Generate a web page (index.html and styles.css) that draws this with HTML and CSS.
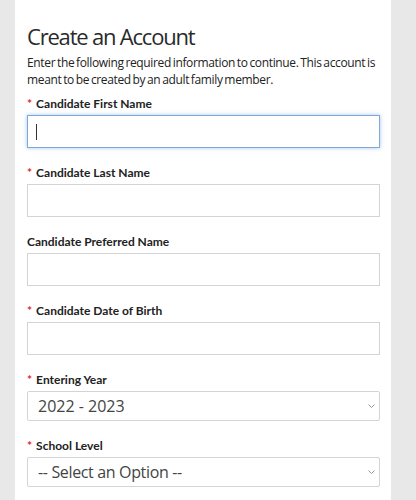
FILE: index.html
```html
<!DOCTYPE html>
<html>
<head>
<meta charset="utf-8">
<link rel="stylesheet" href="styles.css">
</head>
<body>
<div class="panel">
  <h1 class="title">Create an Account</h1>
  <p class="intro">Enter the following required information to continue. This account is meant to be created by an adult family member.</p>
  <form class="form">
    <div class="field">
      <label class="label"><span class="req">*</span>Candidate First Name</label>
      <div class="input focused"><span class="caret"></span></div>
    </div>
    <div class="field">
      <label class="label"><span class="req">*</span>Candidate Last Name</label>
      <div class="input"></div>
    </div>
    <div class="field">
      <label class="label">Candidate Preferred Name</label>
      <div class="input"></div>
    </div>
    <div class="field">
      <label class="label"><span class="req">*</span>Candidate Date of Birth</label>
      <div class="input"></div>
    </div>
    <div class="field">
      <label class="label"><span class="req">*</span>Entering Year</label>
      <div class="select"><span class="sel-text">2022 - 2023</span>
        <svg class="chev" width="7" height="4" viewBox="0 0 7 4"><path d="M0.5 0.5 L3.5 3.5 L6.5 0.5" fill="none" stroke="#999" stroke-width="1"/></svg>
      </div>
    </div>
    <div class="field">
      <label class="label"><span class="req">*</span>School Level</label>
      <div class="select"><span class="sel-text tight">-- Select an Option --</span>
        <svg class="chev" width="7" height="4" viewBox="0 0 7 4"><path d="M0.5 0.5 L3.5 3.5 L6.5 0.5" fill="none" stroke="#999" stroke-width="1"/></svg>
      </div>
    </div>
  </form>
</div>
</body>
</html>
```
FILE: styles.css
```css
html, body {
  margin: 0;
  padding: 0;
  background: #e8e8e8;
  overflow: hidden;
}
body {
  font-family: "Open Sans", "Noto Sans", sans-serif;
  color: #222;
  height: 500px;
}
.panel {
  margin: 0 25px 0 15px;
  background: #fff;
  padding: 20px 11px 20px 12px;
  height: 460px;
}
.title {
  margin: 0;
  font-weight: 400;
  font-size: 22px;
  letter-spacing: -1.2px;
  line-height: 32px;
  color: #2a2a2a;
}
.intro {
  margin: 2px 0 0;
  font-size: 12px;
  letter-spacing: -0.35px;
  word-spacing: -1px;
  line-height: 17px;
  color: #222;
}
.form {
  margin-top: 8px;
}
.field {
  display: flex;
  flex-direction: column;
  margin-bottom: 17px;
}
.label {
  font-family: "Lato", "Open Sans", sans-serif;
  font-weight: 700;
  font-size: 12px;
  line-height: 16px;
  color: #222;
  margin-bottom: 3px;
}
.req {
  color: #e0271c;
  margin-right: 4px;
}
.input {
  height: 31px;
  border: 1px solid #d4d4d4;
  background: #fff;
  display: flex;
  align-items: center;
}
.input.focused {
  border-color: #7ea8d8;
  box-shadow: 0 0 4px rgba(102, 160, 230, 0.6);
}
.caret {
  width: 1px;
  height: 16px;
  background: #333;
  margin-left: 8px;
}
.select {
  height: 28px;
  border: 1px solid #d4d4d4;
  border-radius: 2px;
  display: flex;
  align-items: center;
  justify-content: space-between;
  padding: 0 4px 0 10px;
}
.sel-text {
  font-size: 16px;
  color: #444;
}
.sel-text.tight {
  letter-spacing: -0.35px;
}
.chev {
  display: block;
}
```
